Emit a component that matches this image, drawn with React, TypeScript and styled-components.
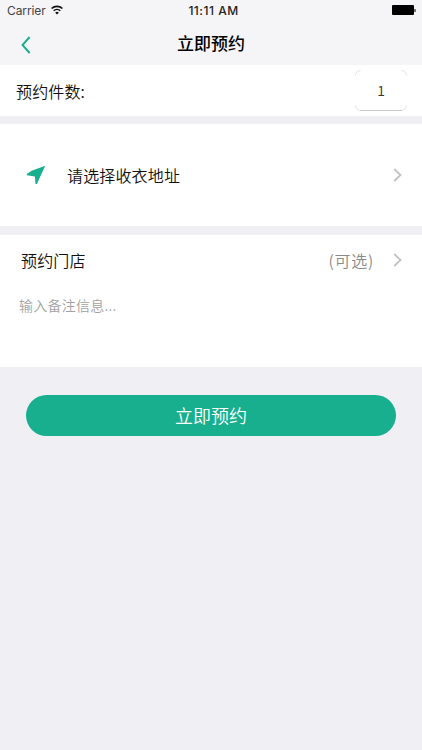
import React from 'react';
import styled, { createGlobalStyle } from 'styled-components';

const colors = {
    accent: '#18af8f',
    page: '#efeff4',
    bar: '#f5f5f8',
    text: '#111',
    muted: '#8a8a8a',
    placeholder: '#a2a2a2',
    arrow: '#c2c2c5',
};

export default function App(): JSX.Element {
    return (
        <Screen>
            <GlobalStyle />
            <Header>
                <StatusBar>
                    <Carrier>Carrier <WifiIcon /></Carrier>
                    <Clock>11:11 AM</Clock>
                    <Battery />
                </StatusBar>
                <NavBar>
                    <BackButton aria-label="返回">
                        <svg width="10" height="18" viewBox="0 0 10 18" fill="none" stroke={colors.accent} strokeWidth="1.9">
                            <path d="M8.6 1 1.5 9 8.6 17" />
                        </svg>
                    </BackButton>
                    <Title>立即预约</Title>
                </NavBar>
            </Header>

            <CountRow>
                <Label>预约件数:</Label>
                <CountBox>
                    <BoxCorners />
                    1
                </CountBox>
            </CountRow>

            <AddressRow>
                <LocationIcon />
                <Label>请选择收衣地址</Label>
                <Arrow />
            </AddressRow>

            <StoreSection>
                <StoreRow>
                    <Label>预约门店</Label>
                    <Optional>(可选)</Optional>
                    <Arrow />
                </StoreRow>
                <Remark>输入备注信息...</Remark>
            </StoreSection>

            <SubmitButton>立即预约</SubmitButton>
        </Screen>
    )
}

// ============================== Icons ==============================

function WifiIcon(): JSX.Element {
    return (
        <svg width="12" height="10" viewBox="0 0 12 10" fill="none" stroke="#111" strokeWidth="1.6">
            <path d="M.6 3.5a7.8 7.8 0 0 1 10.8 0" />
            <path d="M2.7 5.8a4.7 4.7 0 0 1 6.6 0" />
            <path d="M6 9.6 4.2 7.7a2.6 2.6 0 0 1 3.6 0Z" fill="#111" stroke="none" />
        </svg>
    )
}

function LocationIcon(): JSX.Element {
    return (
        <svg width="20" height="20" viewBox="0 0 20 20" fill={colors.accent}>
            <path d="M19.2.8 10.9 19.1 9.5 19.1 8.9 11.4 .8 10.2V9.1L5.6 5.8Z" />
        </svg>
    )
}

function Arrow(): JSX.Element {
    return (
        <ArrowSvg width="9" height="14" viewBox="0 0 9 14" fill="none" stroke={colors.arrow} strokeWidth="1.8">
            <path d="M1.2 1 7.5 7 1.2 13" />
        </ArrowSvg>
    )
}

// faint rounded corners, only the bottom edge is a full line
function BoxCorners(): JSX.Element {
    return (
        <CornersSvg width="52" height="41" viewBox="0 0 52 41" fill="none" stroke="#e2e2e2">
            <path d="M.5 5.5a5 5 0 0 1 5-5M46.5.5a5 5 0 0 1 5 5M51.5 35.5a5 5 0 0 1-5 5M5.5 40.5a5 5 0 0 1-5-5" />
            <path d="M5 40.5H47" stroke="#c8c8c8" />
        </CornersSvg>
    )
}

const ArrowSvg = styled.svg`
    margin-left: auto;
`;

const CornersSvg = styled.svg`
    position: absolute;
    top: 0;
    left: 0;
`;

// ============================== Page ==============================

const GlobalStyle = createGlobalStyle`
    body {
        margin: 0;
        background-color: ${colors.page};
    }
`;

const Screen = styled.div`
    display: flex;
    flex-direction: column;

    width: 100%;
    min-height: 100vh;

    color: ${colors.text};
    background-color: ${colors.page};
    font-family: "Noto Sans CJK SC", sans-serif;
    font-size: 16px;
    font-weight: 350;
    line-height: 24px;
`;

// ============================== Header ==============================

const Header = styled.header`
    height: 65px;

    background-color: ${colors.bar};
`;

const StatusBar = styled.div`
    display: grid;
    grid-template-columns: 1fr auto 1fr;
    align-items: center;

    height: 22px;
    padding: 0 6px 0 7px;
    box-sizing: border-box;

    color: #222;
    font-family: Inter, "Liberation Sans", sans-serif;
    font-size: 12px;
    font-weight: 400;
    line-height: 22px;
`;

const Carrier = styled.div`
    display: flex;
    align-items: center;
    gap: 5px;

    color: #444;
    letter-spacing: -0.1px;

    svg {
        margin-bottom: 2px;
    }
`;

const Clock = styled.div`
    padding-left: 4px;

    font-weight: 500;
    letter-spacing: 0.5px;
`;

const Battery = styled.div`
    justify-self: end;

    width: 22px;
    height: 10px;
    margin: 0 2px 2px 0;

    background-color: #000;
    border-radius: 1px;
    position: relative;

    &::after {
        content: '';
        position: absolute;
        top: 4px;
        right: -2px;
        width: 2px;
        height: 3px;
        background-color: #777;
    }
`;

const NavBar = styled.nav`
    display: grid;
    grid-template-columns: 1fr auto 1fr;
    align-items: center;

    height: 43px;
`;

const BackButton = styled.button`
    display: flex;
    justify-self: start;

    margin: 2px 0 0 21px;
    padding: 0;

    background: none;
    border: none;
`;

const Title = styled.h1`
    margin: 0 0 2px;

    color: #000;
    font-size: 17px;
    font-weight: 500;
`;

// ============================== Form ==============================

const Row = styled.div`
    display: flex;
    flex-direction: row;
    align-items: center;

    box-sizing: border-box;

    background-color: #fff;
`;

const CountRow = styled(Row)`
    justify-content: space-between;

    height: 51px;
    padding: 0 15px 0 16px;
`;

const AddressRow = styled(Row)`
    height: 102px;
    margin: 8px 0 9px;
    padding: 0 20px 0 26px;

    svg:first-child {
        margin-right: 21px;
    }
`;

const StoreSection = styled.section`
    height: 132px;

    background-color: #fff;
`;

const StoreRow = styled(Row)`
    height: 50px;
    padding: 0 20px 0 21px;

    ${ArrowSvg} {
        margin-left: 19px;
    }
`;

const Label = styled.span`
    letter-spacing: 0.15px;
`;

const CountBox = styled.div`
    display: flex;
    justify-content: center;
    align-items: center;

    width: 52px;
    height: 41px;
    padding-bottom: 1px;
    box-sizing: border-box;
    position: relative;

    color: #333;
    font-size: 14px;
`;

const Optional = styled.span`
    margin-left: auto;

    color: ${colors.muted};
    letter-spacing: 0.7px;
`;

const Remark = styled.div`
    padding: 8px 19px;

    color: ${colors.placeholder};
    font-size: 14px;
    letter-spacing: 0.25px;
`;

const SubmitButton = styled.button`
    height: 41px;
    margin: 28px 26px 0;
    padding: 0 0 2px;

    color: #fff;
    background-color: ${colors.accent};
    border: none;
    border-radius: 21px;

    font-family: inherit;
    font-size: 18px;
    font-weight: 350;
`;
